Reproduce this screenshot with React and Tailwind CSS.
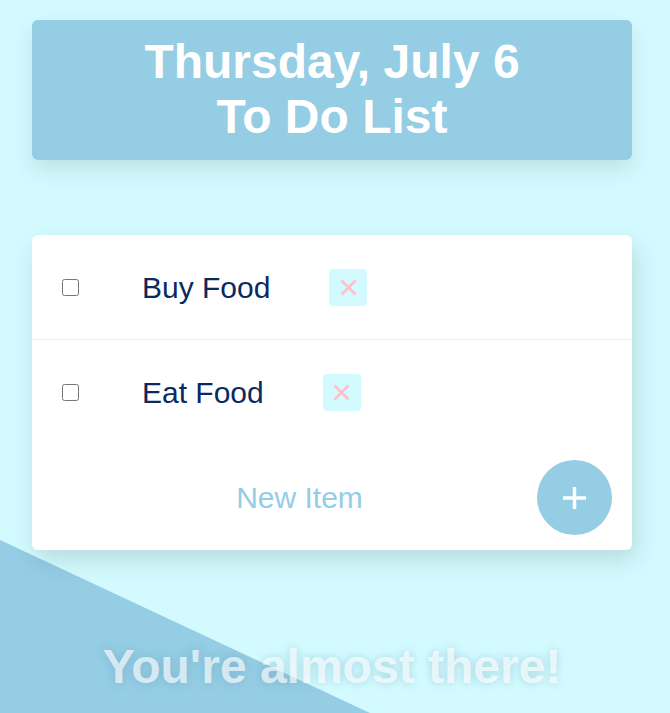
import React, { useState } from "react";

const ITEMS = [
  { id: 1, text: "Buy Food" },
  { id: 2, text: "Eat Food" },
];

const TodoRow = ({ item, onDelete, last }) => (
  <div className={`h-[105px] pl-[30px] flex items-center ${last ? "" : "border-b border-[#efefef]"}`}>
    <input type="checkbox" className="w-[17px] h-[17px] m-0 shrink-0" />
    <p className="ml-[63px] text-[30px] text-[#0a2a5e]">{item.text}</p>
    <button
      onClick={() => onDelete(item.id)}
      className="ml-[59px] w-[38px] h-[37px] rounded-[4px] bg-[#d3fbff] flex items-center justify-center"
    >
      <svg width="17" height="17" viewBox="0 0 17 17">
        <path d="M1.5 1.5 L15.5 15.5 M15.5 1.5 L1.5 15.5" stroke="#ffc0cb" strokeWidth="2.6" />
      </svg>
    </button>
  </div>
);

export default function App() {
  const [items, setItems] = useState(ITEMS);
  const [text, setText] = useState("");

  const remove = (id) => setItems(items.filter((i) => i.id !== id));
  const add = (e) => {
    e.preventDefault();
    if (!text.trim()) return;
    setItems([...items, { id: Date.now(), text }]);
    setText("");
  };

  return (
    <div className="relative min-h-[713px] overflow-hidden bg-[#d3fbff] font-['Liberation_Sans',Arial,sans-serif]">
      <div className="absolute left-0 bottom-0 w-[370px] h-[173px] bg-[#94cde4] [clip-path:polygon(0_0,100%_100%,0_100%)]" />

      <div className="relative w-[600px] ml-[32px] pt-[20px]">
        <div className="bg-[#94cde4] rounded-[6px] pt-[14px] pb-[16px] text-center shadow-[0_10px_22px_rgba(0,0,0,0.1)]">
          <h1 className="text-[48px] font-bold text-white leading-[55px]">Thursday, July 6</h1>
          <h1 className="text-[48px] font-bold text-white leading-[55px]">To Do List</h1>
        </div>

        <div className="mt-[75px] bg-white rounded-[6px] shadow-[4px_10px_24px_rgba(0,0,0,0.13)]">
          {items.map((item, i) => (
            <TodoRow key={item.id} item={item} onDelete={remove} last={i === items.length - 1} />
          ))}
          <form onSubmit={add} className="h-[105px] pl-[30px] pr-[20px] flex items-center">
            <input
              type="text"
              value={text}
              onChange={(e) => setText(e.target.value)}
              placeholder="New Item"
              className="flex-1 min-w-0 text-center text-[30px] text-[#0a2a5e] placeholder:text-[#94cde4] outline-none bg-transparent"
            />
            <button type="submit" className="w-[75px] h-[75px] rounded-full bg-[#94cde4] flex items-center justify-center shrink-0">
              <svg width="23" height="22" viewBox="0 0 23 22">
                <path d="M11.5 0 V22 M0 11 H23" stroke="white" strokeWidth="3.5" />
              </svg>
            </button>
          </form>
        </div>

        <p className="mt-[89px] text-center text-[48px] font-bold leading-[55px] text-white/65 [text-shadow:0_0_8px_rgba(80,140,170,0.35)]">
          You're almost there!
        </p>
      </div>
    </div>
  );
}
